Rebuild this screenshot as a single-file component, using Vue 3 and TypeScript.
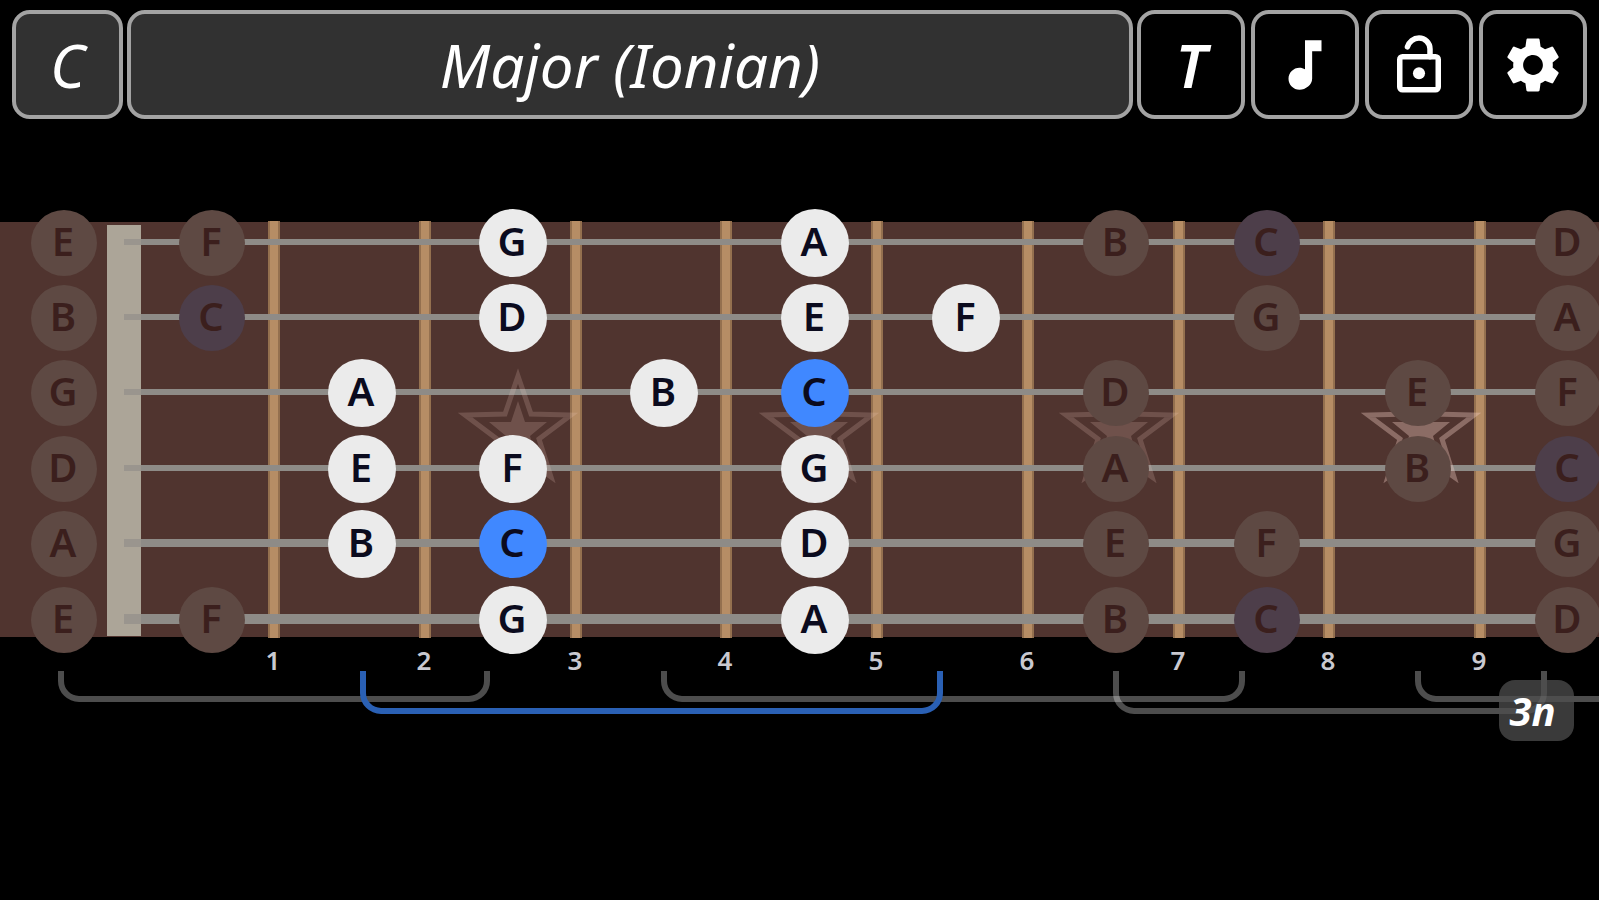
<script setup lang="ts">
interface Note {
  key: string
  name: string
  x: number
  y: number
  root: boolean
  active: boolean
}

interface Bracket {
  from: number
  to: number
  depth: number
  active: boolean
}

const names = ['C', 'C#', 'D', 'D#', 'E', 'F', 'F#', 'G', 'G#', 'A', 'A#', 'B']
const scale = [0, 2, 4, 5, 7, 9, 11]
const root = 0
const position = { first: 2, last: 6 }

const strings = [
  { open: 4, y: 242, width: 6 },
  { open: 11, y: 317, width: 6 },
  { open: 7, y: 392, width: 6 },
  { open: 2, y: 468, width: 6 },
  { open: 9, y: 543, width: 8 },
  { open: 4, y: 619, width: 10 },
]

const frets = [274, 425, 576, 726, 877, 1028, 1179, 1329, 1480]
const noteColumns = [64, 212, 362, 513, 664, 815, 966, 1116, 1267, 1418, 1568]

const notes: Note[] = strings.flatMap((s, si) =>
  noteColumns.flatMap((x, fret) => {
    const pitch = (s.open + fret) % 12
    if (!scale.includes(pitch)) return []
    return [{
      key: `${si}-${fret}`,
      name: names[pitch],
      x,
      y: s.y + 1,
      root: pitch === root,
      active: fret >= position.first && fret <= position.last,
    }]
  }),
)

const brackets: Bracket[] = [
  { from: 61, to: 487, depth: 699, active: false },
  { from: 664, to: 1242, depth: 699, active: false },
  { from: 1116, to: 1544, depth: 711, active: false },
  { from: 1418, to: 1996, depth: 699, active: false },
  { from: 363, to: 940, depth: 711, active: true },
]

const bracketPath = (b: Bracket): string =>
  `M${b.from} 671V${b.depth - 18}A18 18 0 0 0 ${b.from + 18} ${b.depth}` +
  `H${b.to - 18}A18 18 0 0 0 ${b.to} ${b.depth - 18}V671`

const starPoints = (cx: number, cy: number, r: number): string =>
  Array.from({ length: 10 }, (_, i) => {
    const radius = i % 2 === 0 ? r : r * 0.4
    const a = (Math.PI / 5) * i - Math.PI / 2
    return `${Math.round(cx + radius * Math.cos(a))},${Math.round(cy + radius * Math.sin(a))}`
  }).join(' ')

const stars = [
  { x: 518, bright: false },
  { x: 819, bright: false },
  { x: 1119, bright: false },
  { x: 1421, bright: true },
]
</script>

<template>
  <main class="app">
    <header class="toolbar">
      <div class="selectors">
        <button class="btn filled key" type="button">C</button>
        <button class="btn filled scale" type="button">Major (Ionian)</button>
      </div>
      <div class="tools">
        <button class="btn tuning" type="button">T</button>
        <button class="btn" type="button" aria-label="Note">
          <svg class="icon" viewBox="0 0 24 24" aria-hidden="true">
            <path d="M12 3v10.55c-.59-.34-1.27-.55-2-.55-2.21 0-4 1.79-4 4s1.79 4 4 4 4.600-1.790 4.600-4V7H18V3h-6z" />
          </svg>
        </button>
        <button class="btn" type="button" aria-label="Lock">
          <svg class="icon" viewBox="0 0 24 24" aria-hidden="true">
            <rect class="line" x="5" y="9" width="14" height="12" rx="1" />
            <path class="line" d="M7.8 5.400C8.300 3.600 10 2.200 12 2.200c2.200 0 4 1.800 4 4v2.800" />
            <circle cx="12" cy="15" r="2.200" />
          </svg>
        </button>
        <button class="btn" type="button" aria-label="Settings">
          <svg class="icon" viewBox="0 0 24 24" aria-hidden="true">
            <path d="M19.14 12.94c.04-.3.06-.61.06-.94 0-.32-.02-.64-.07-.94l2.030-1.580c.18-.14.23-.41.12-.61l-1.920-3.320c-.12-.22-.37-.29-.59-.22l-2.390.96c-.5-.38-1.030-.7-1.620-.94L14.4 2.810c-.04-.24-.24-.41-.48-.41h-3.840c-.24 0-.43.17-.47.41L9.250 5.350C8.660 5.590 8.120 5.920 7.630 6.290L5.240 5.330c-.22-.08-.47 0-.59.22L2.740 8.870c-.12.21-.08.47.12.61l2.030 1.580C4.840 11.360 4.800 11.690 4.800 12s.02.64.07.94l-2.030 1.580c-.18.14-.23.41-.12.61l1.920 3.320c.12.22.37.29.59.22l2.390-.96c.5.38 1.030.7 1.620.94l.36 2.540c.05.24.24.41.48.41h3.840c.24 0 .44-.17.47-.41l.36-2.540c.59-.24 1.130-.56 1.620-.94l2.390.96c.22.08.47 0 .59-.22l1.920-3.320c.12-.22.07-.47-.12-.61l-2.010-1.580zM12 15.600c-1.980 0-3.600-1.620-3.600-3.600s1.620-3.600 3.600-3.600 3.600 1.620 3.600 3.600-1.620 3.600-3.600 3.600z" />
          </svg>
        </button>
      </div>
    </header>

    <svg class="fretboard" role="img" aria-label="C Major (Ionian) on the fretboard">
      <g transform="translate(0 -128)">
        <rect class="wood" x="0" y="222" width="100%" height="415" />
        <rect class="nut" x="107" y="225" width="34" height="411" />
        <g v-for="(x, i) in frets" :key="x">
          <rect class="fret" :x="x - 6" y="221" width="12" height="417" />
          <rect class="fret-core" :x="x - 4" y="221" width="8" height="417" />
          <text class="fret-number" :x="x - 1" y="670">{{ i + 1 }}</text>
        </g>
        <g v-for="s in strings" :key="s.y">
          <rect class="string" x="141" :y="s.y - s.width / 2" width="100%" :height="s.width" />
          <rect class="string-end" x="124" :y="s.y - s.width / 2" width="17" :height="s.width" />
        </g>
        <g v-for="s in stars" :key="s.x" class="star" :class="{ bright: s.bright }">
          <polygon class="star-outline" :points="starPoints(s.x, 432, 56)" />
          <polygon class="star-fill" :points="starPoints(s.x, 432, 31)" />
        </g>
        <g v-for="n in notes" :key="n.key" class="note" :class="{ root: n.root, active: n.active }">
          <circle :cx="n.x" :cy="n.y" :r="n.active ? 34 : 33" />
          <text :x="n.x - 1" :y="n.y + 13">{{ n.name }}</text>
        </g>
        <path v-for="b in brackets" :key="b.from" class="bracket" :class="{ active: b.active }" :d="bracketPath(b)" />
      </g>
    </svg>

    <button class="badge" type="button">3n</button>
  </main>
</template>

<style scoped>
.app {
  position: relative;
  min-height: 100vh;
  overflow: hidden;
  background: #000;
  color: #fff;
  font-family: "Noto Sans", "Open Sans", sans-serif;
}

.toolbar {
  display: flex;
  gap: 4px;
  height: 128px;
  padding: 10px 12px 8px;
  box-sizing: border-box;
}

.selectors {
  display: flex;
  flex: 1;
  gap: 4px;
}

.tools {
  display: flex;
  gap: 6px;
}

.btn {
  display: flex;
  align-items: center;
  justify-content: center;
  width: 108px;
  height: 109px;
  padding: 0;
  box-sizing: border-box;
  border: 4px solid #a3a3a3;
  border-radius: 18px;
  background: #000;
  color: #fff;
  font-family: inherit;
  font-size: 60px;
  font-style: italic;
  line-height: 72px;
}

.filled {
  background: #313131;
}

.key {
  width: 111px;
}

.scale {
  flex: 1;
}

.tuning {
  font-weight: 600;
}

.icon {
  width: 66px;
  height: 66px;
  fill: #fff;
}

.line {
  fill: none;
  stroke: #fff;
  stroke-width: 2;
  stroke-linecap: round;
}

.fretboard {
  display: block;
  width: 100%;
  height: 620px;
}

.wood {
  fill: #50342f;
}

.nut {
  fill: #aca598;
}

.fret {
  fill: #94704f;
}

.fret-core {
  fill: #b68d65;
}

.fret-number {
  fill: #c9c9d0;
  font-size: 26px;
  font-weight: 600;
  text-anchor: middle;
}

.string {
  fill: #8e8b87;
}

.string-end {
  fill: #8e8b87;
  opacity: 0.6;
}

.star {
  opacity: 0.19;
}

.star.bright {
  opacity: 0.36;
}

.star-outline {
  fill: none;
  stroke: #f4cfc6;
  stroke-width: 5;
}

.star-fill {
  fill: #f4cfc6;
}

.note circle {
  fill: #5e4943;
}

.note text {
  fill: #3b1f1d;
  font-size: 40px;
  font-weight: 600;
  text-anchor: middle;
}

.note.root circle {
  fill: #4d3e4a;
}

.note.active circle {
  fill: #ebebeb;
}

.note.active text {
  fill: #0b0b1e;
}

.note.active.root circle {
  fill: #4088ff;
}

.bracket {
  fill: none;
  stroke: rgba(255, 255, 255, 0.3);
  stroke-width: 6;
}

.bracket.active {
  stroke: #2a60b4;
}

.badge {
  position: absolute;
  top: 680px;
  right: 25px;
  width: 75px;
  height: 61px;
  padding: 0 8px 0 0;
  border: 0;
  border-radius: 16px;
  background: rgba(78, 78, 78, 0.75);
  color: #fff;
  font-family: inherit;
  font-size: 40px;
  font-style: italic;
  font-weight: 700;
  line-height: 48px;
}
</style>

<style>
body {
  margin: 0;
  background: #000;
}
</style>
